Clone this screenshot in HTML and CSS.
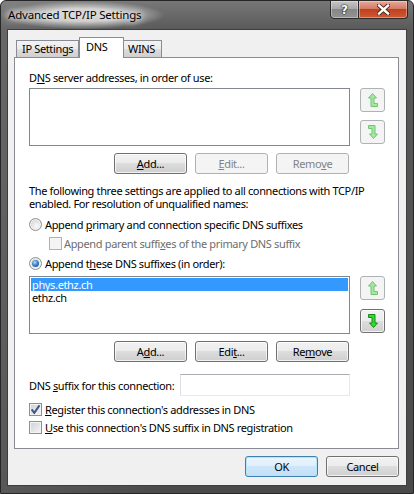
FILE: index.html
```html
<!DOCTYPE html>
<html lang="en">
<head>
  <meta charset="UTF-8" />
  <title>Advanced TCP/IP Settings</title>
  <link rel="stylesheet" href="styles.css">
</head>
<body>
  <div class="window">
    <div class="titlebar">
      <span class="title">Advanced TCP/IP Settings</span>
      <div class="caption">
        <span class="cap help">?</span>
        <span class="cap close">
          <svg width="13" height="11" viewBox="0 0 13 11">
            <path d="M2 1.5 L11 9.5 M11 1.5 L2 9.5" stroke="#4a1d12" stroke-width="4.2" stroke-linecap="square"/>
            <path d="M2 1.5 L11 9.5 M11 1.5 L2 9.5" stroke="#fff" stroke-width="2.4" stroke-linecap="square"/>
          </svg>
        </span>
      </div>
    </div>

    <div class="client">
      <div class="tabs">
        <div class="tab ip">IP Settings</div>
        <div class="tab dns">DNS</div>
        <div class="tab wins">WINS</div>
      </div>

      <div class="panel">
        <div class="label">D<u>N</u>S server addresses, in order of use:</div>
        <div class="list-row">
          <div class="listbox"></div>
          <div class="arrows">
            <button class="arrow" disabled>
              <svg width="10" height="14" viewBox="0 0 10 14"><path class="arr" d="M4.5 0.5 L8.5 5 L6 5 L6 10.5 L9.5 10.5 L9.5 13.5 L3 13.5 L3 5 L0.5 5 Z"/></svg>
            </button>
            <button class="arrow" disabled>
              <svg width="10" height="14" viewBox="0 0 10 14"><path class="arr" d="M0.5 0.5 L7 0.5 L7 9 L9.5 9 L5.5 13.5 L1.5 9 L4 9 L4 3.5 L0.5 3.5 Z"/></svg>
            </button>
          </div>
        </div>
        <div class="button-row">
          <button class="btn"><u>A</u>dd...</button>
          <button class="btn" disabled><u>E</u>dit...</button>
          <button class="btn" disabled>Remo<u>v</u>e</button>
        </div>

        <p class="note">The following three settings are applied to all connections with TCP/IP<br>enabled. For resolution of unqualified names:</p>

        <div class="option first">
          <span class="radio"></span>
          <span>Append <u>p</u>rimary and connection specific DNS suffixes</span>
        </div>
        <div class="option sub disabled">
          <span class="check"></span>
          <span>Append parent suffi<u>x</u>es of the primary DNS suffix</span>
        </div>
        <div class="option second">
          <span class="radio on"></span>
          <span>Append t<u>h</u>ese DNS suffixes (in order):</span>
        </div>

        <div class="list-row suffixes">
          <div class="listbox">
            <div class="item selected">phys.ethz.ch</div>
            <div class="item">ethz.ch</div>
          </div>
          <div class="arrows">
            <button class="arrow" disabled>
              <svg width="10" height="14" viewBox="0 0 10 14"><path class="arr" d="M4.5 0.5 L8.5 5 L6 5 L6 10.5 L9.5 10.5 L9.5 13.5 L3 13.5 L3 5 L0.5 5 Z"/></svg>
            </button>
            <button class="arrow">
              <svg width="10" height="14" viewBox="0 0 10 14"><path class="arr" d="M0.5 0.5 L7 0.5 L7 9 L9.5 9 L5.5 13.5 L1.5 9 L4 9 L4 3.5 L0.5 3.5 Z"/></svg>
            </button>
          </div>
        </div>
        <div class="button-row">
          <button class="btn">A<u>d</u>d...</button>
          <button class="btn">Edi<u>t</u>...</button>
          <button class="btn">Re<u>m</u>ove</button>
        </div>

        <div class="suffix-row">
          <span class="suffix-label">DNS <u>s</u>uffix for this connection:</span>
          <span class="textbox"></span>
        </div>

        <div class="option reg">
          <span class="check on">
            <svg width="11" height="11" viewBox="0 0 11 11"><path d="M1.6 5.4 L4.3 8.8 L9.5 1.4" fill="none" stroke="#3f5489" stroke-width="2"/></svg>
          </span>
          <span><u>R</u>egister this connection's addresses in DNS</span>
        </div>
        <div class="option use">
          <span class="check"></span>
          <span><u>U</u>se this connection's DNS suffix in DNS registration</span>
        </div>
      </div>

      <div class="footer">
        <button class="btn default">OK</button>
        <button class="btn">Cancel</button>
      </div>
    </div>
  </div>
</body>
</html>
```

FILE: styles.css
```css
body {
  margin: 0;
  background-color: #fff;
  font-family: "Noto Sans", sans-serif;
  font-size: 11px;
  letter-spacing: -0.35px;
  color: #000;
}

u {
  text-underline-offset: 1px;
}

.window {
  width: 414px;
  height: 494px;
  box-sizing: border-box;
  border: 1px solid #262626;
  border-radius: 6px 6px 0 0;
  background: linear-gradient(to right, rgba(255, 255, 255, 0.08), rgba(255, 255, 255, 0) 40%),
              linear-gradient(#777, #5a5a5a 28px, #4a4a4a);
  display: flex;
  flex-direction: column;
}

.titlebar {
  height: 28px;
  display: flex;
  align-items: flex-start;
}

.title {
  line-height: 28px;
  padding: 0 24px 0 7px;
  font-size: 11.5px;
  letter-spacing: -0.2px;
  background: radial-gradient(ellipse closest-side, rgba(220, 220, 220, 0.85) 45%, rgba(220, 220, 220, 0));
  text-shadow: 0 0 6px #fff, 0 0 10px #fff;
}

.caption {
  margin-left: auto;
  margin-right: 5px;
  margin-top: -1px;
  display: flex;
}

.cap {
  height: 19px;
  box-sizing: border-box;
  border: 1px solid #2b2b2b;
  display: flex;
  align-items: center;
  justify-content: center;
  box-shadow: inset 0 0 0 1px rgba(255, 255, 255, 0.35);
}

.help {
  width: 29px;
  border-radius: 0 0 0 4px;
  background: linear-gradient(#c6c6c6, #a8a8a8 45%, #878787 50%, #949494);
  color: #fff;
  font-family: "DejaVu Sans", sans-serif;
  font-weight: bold;
  font-size: 12px;
  letter-spacing: 0;
  text-shadow: 0 0 1px #000, 0 0 2px #000;
}

.close {
  width: 49px;
  border-left: 0;
  border-radius: 0 0 4px 0;
  background: linear-gradient(#e8a899, #d47b66 45%, #c2401f 50%, #cf5a32);
}

.client {
  flex: 1;
  margin: 0 6px 7px;
  border: 1px solid #3e3e3e;
  background-color: #f0f0f0;
  display: flex;
  flex-direction: column;
}

/* tabs */
.tabs {
  display: flex;
  align-items: flex-end;
  height: 21px;
  margin: 7px 0 -1px 8px;
}

.tab {
  box-sizing: border-box;
  height: 17px;
  margin-bottom: 1px;
  border: 1px solid #898c95;
  border-bottom: 0;
  background: linear-gradient(#f3f3f3, #ebebeb 50%, #dddddd 50%, #cfcfcf);
  line-height: 16px;
  padding-left: 5px;
}

.tab.ip {
  width: 63px;
}

.tab.dns {
  width: 45px;
  height: 21px;
  margin-bottom: 0;
  background: #fff;
  line-height: 17px;
  padding-left: 6px;
  position: relative;
  z-index: 1;
}

.tab.wins {
  width: 39px;
  margin-left: -1px;
  padding-left: 4px;
}

.panel {
  margin: 0 7px 0 6px;
  border: 1px solid #898c95;
  background-color: #fff;
  padding: 12px 0 13px 14px;
}

.label {
  line-height: 15px;
  height: 15px;
}

.list-row {
  display: flex;
  margin-top: 3px;
}

.list-row.suffixes {
  margin-top: 5px;
}

.listbox {
  width: 321px;
  height: 58px;
  box-sizing: border-box;
  border: 1px solid #828790;
  background-color: #fff;
  padding: 1px;
}

.item {
  line-height: 13px;
  padding-left: 1px;
}

.item.selected {
  background-color: #3399ff;
  color: #fff;
}

.arrows {
  display: flex;
  flex-direction: column;
  gap: 8px;
  margin-left: 10px;
}

.suffixes .arrows {
  gap: 9px;
}

button {
  font-family: inherit;
  font-size: inherit;
  letter-spacing: inherit;
  color: #000;
  padding: 0;
  box-sizing: border-box;
  border: 1px solid #707070;
  border-radius: 3px;
  background: linear-gradient(#f2f2f2, #ebebeb 50%, #dddddd 50%, #cfcfcf);
  box-shadow: inset 0 0 0 1px rgba(255, 255, 255, 0.7);
}

button:disabled {
  border-color: #adb2b5;
  background: #f4f4f4;
  color: #838383;
  box-shadow: none;
}

.arrow {
  width: 25px;
  height: 24px;
  display: flex;
  align-items: center;
  justify-content: center;
}

.arr {
  fill: #2fdc2f;
  stroke: #17891a;
  stroke-width: 1;
}

.arrow:disabled .arr {
  fill: #a4e6a4;
  stroke: #6fc86f;
}

.button-row {
  display: flex;
  justify-content: flex-end;
  gap: 8px;
  width: 320px;
  margin-top: 7px;
}

.btn {
  width: 73px;
  height: 21px;
}

.btn.default {
  border-color: #3c7fb1;
  background: linear-gradient(#eaf5fd, #dfeffb 50%, #cde6f9 50%, #c2dff6);
  box-shadow: inset 0 0 0 1px #b6e4fa;
}

.note {
  margin: 10px 0 0;
  line-height: 13px;
}

/* radio and check rows */
.option {
  display: flex;
  align-items: center;
  gap: 3px;
  height: 15px;
  white-space: nowrap;
}

.option.first {
  margin-top: 7px;
}

.option.sub {
  margin-top: 4px;
  padding-left: 20px;
  gap: 2px;
}

.option.second {
  margin-top: 5px;
}

.option.reg {
  margin-top: 6px;
}

.option.use {
  margin-top: 3px;
}

.option.disabled {
  color: #6d6d6d;
}

.radio {
  width: 13px;
  height: 13px;
  box-sizing: border-box;
  border: 1px solid #8e8f8f;
  border-radius: 50%;
  background: radial-gradient(circle at 60% 65%, #fbfbfb, #d2d2d2 80%);
  box-shadow: inset 0 0 0 1px #f4f4f4;
  position: relative;
}

.radio.on::after {
  content: "";
  position: absolute;
  left: 2px;
  top: 2px;
  width: 7px;
  height: 7px;
  border-radius: 50%;
  background: radial-gradient(circle at 40% 35%, #b8e0fb, #3a82cc 45%, #164a8a);
}

.check {
  width: 13px;
  height: 13px;
  box-sizing: border-box;
  border: 1px solid #8e8f8f;
  background: linear-gradient(135deg, #cdd0d5, #f6f6f6);
  box-shadow: inset 0 0 0 1px #f4f4f4;
  display: flex;
  align-items: center;
  justify-content: center;
}

.disabled .check {
  border-color: #b1b1b1;
  background: #f4f4f4;
  box-shadow: none;
}

.suffix-row {
  display: flex;
  align-items: center;
  margin-top: 12px;
}

.suffix-label {
  width: 151px;
  white-space: nowrap;
}

.textbox {
  width: 170px;
  height: 22px;
  box-sizing: border-box;
  border: 1px solid #e3e9ef;
  border-top-color: #abadb3;
  border-left-color: #dbdfe6;
  background-color: #fff;
}

.footer {
  display: flex;
  justify-content: flex-end;
  gap: 8px;
  margin: 7px 7px 0 0;
}
```
